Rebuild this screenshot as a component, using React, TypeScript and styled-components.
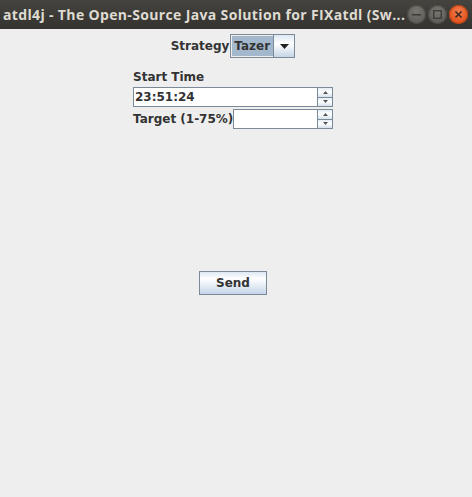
import React from "react";
import styled, { createGlobalStyle } from "styled-components";

const Global = createGlobalStyle`
  html, body { margin: 0; padding: 0; background: #eeeeee; }
  body { width: 472px; height: 497px; overflow: hidden; }
`;

const Window = styled.div`
  width: 472px;
  height: 497px;
  display: flex;
  flex-direction: column;
  background: #eeeeee;
  font-family: "DejaVu Sans", sans-serif;
`;

const TitleBar = styled.div`
  height: 29px;
  flex: none;
  display: flex;
  align-items: center;
  padding: 0 4px 0 3px;
  background: linear-gradient(#45443f, #3a3935 60%, #34332f);
  box-sizing: border-box;
`;

const Title = styled.div`
  flex: 1;
  color: #dfdbd2;
  font-family: "Open Sans", "Noto Sans", sans-serif;
  font-weight: 700;
  font-size: 14px;
  letter-spacing: 0.35px;
  white-space: nowrap;
  overflow: hidden;
  padding-bottom: 1px;
`;

const WinButtons = styled.div`
  display: flex;
  gap: 2px;
  align-items: center;
`;

const WinBtn = styled.div<{ $close?: boolean }>`
  width: 19px;
  height: 19px;
  border-radius: 50%;
  display: flex;
  align-items: center;
  justify-content: center;
  background: ${(p) =>
    p.$close
      ? "radial-gradient(circle at 50% 35%, #f27b4d, #e2531d 70%, #c8461a)"
      : "radial-gradient(circle at 50% 35%, #77766f, #5f5e59 70%, #55544f)"};
  box-shadow: inset 0 0 0 1px ${(p) => (p.$close ? "#b24317" : "#4a4945")};
`;

const Content = styled.div`
  flex: 1;
  width: 466px;
  display: flex;
  flex-direction: column;
  align-items: center;
  padding-top: 5px;
`;

const StrategyRow = styled.div`
  display: flex;
  align-items: center;
  height: 24px;
`;

const Label = styled.span`
  font-weight: 700;
  font-size: 12px;
  color: #333333;
  white-space: nowrap;
`;

const Combo = styled.div`
  display: flex;
  width: 65px;
  height: 24px;
  box-sizing: border-box;
  border: 1px solid #7a8a99;
  background: #eeeeee;
  margin-left: 1px;
`;

const ComboValue = styled.div`
  flex: 1;
  background: #a3b8cc;
  font-weight: 700;
  font-size: 12px;
  color: #333;
  display: flex;
  align-items: center;
  padding-left: 2px;
  margin: 1px 0 1px 1px;
`;

const ComboArrow = styled.div`
  width: 20px;
  display: flex;
  align-items: center;
  justify-content: center;
  background: linear-gradient(#dde8f3, #ffffff 40%, #c4d5e6);
  border-left: 1px solid #7a8a99;
`;

const Form = styled.div`
  width: 200px;
  margin-top: 12px;
  display: flex;
  flex-direction: column;
`;

const FieldRow = styled.div<{ $gap: number }>`
  display: flex;
  align-items: center;
  margin-top: ${(p) => p.$gap}px;
`;

const Spinner = styled.div<{ $w: number; $gap?: number }>`
  display: flex;
  width: ${(p) => p.$w}px;
  height: 20px;
  margin-top: ${(p) => p.$gap ?? 0}px;
`;

const TextField = styled.div`
  flex: 1;
  box-sizing: border-box;
  border: 1px solid #7a8a99;
  border-right: none;
  background: #ffffff;
  font-weight: 700;
  font-size: 12px;
  color: #333;
  display: flex;
  align-items: center;
  padding-left: 1px;
`;

const SpinButtons = styled.div`
  width: 16px;
  display: flex;
  flex-direction: column;
`;

const SpinBtn = styled.div`
  flex: 1;
  box-sizing: border-box;
  border: 1px solid #7a8a99;
  background: linear-gradient(#e4ecf4, #ffffff 45%, #d6e1ec);
  display: flex;
  align-items: center;
  justify-content: center;
  & + & { border-top: none; }
`;

const ButtonArea = styled.div`
  flex: 1;
  display: flex;
  align-items: center;
  justify-content: center;
  padding-bottom: 61px;
`;

const SendButton = styled.button`
  width: 68px;
  height: 24px;
  box-sizing: border-box;
  border: 1px solid #7a8a99;
  border-radius: 0;
  background: linear-gradient(#dde8f3, #ffffff 30%, #c5d6e8);
  font-family: "DejaVu Sans", sans-serif;
  font-weight: 700;
  font-size: 12px;
  color: #333;
  padding: 0;
`;

const Tri = ({ up, size = 3, color = "#333" }: { up?: boolean; size?: number; color?: string }) => (
  <svg width={size * 2 + 1} height={size + 1} viewBox={`0 0 ${size * 2 + 1} ${size + 1}`}>
    <polygon
      points={up ? `0,${size + 1} ${size * 2 + 1},${size + 1} ${size + 0.5},0` : `0,0 ${size * 2 + 1},0 ${size + 0.5},${size + 1}`}
      fill={color}
    />
  </svg>
);

export default function App() {
  return (
    <Window>
      <Global />
      <TitleBar>
        <Title>atdl4j - The Open-Source Java Solution for FIXatdl (Sw...</Title>
        <WinButtons>
          <WinBtn>
            <svg width="9" height="9" viewBox="0 0 9 9">
              <rect x="0" y="4" width="9" height="1.5" fill="#3c3b37" />
            </svg>
          </WinBtn>
          <WinBtn>
            <svg width="9" height="9" viewBox="0 0 9 9">
              <rect x="0.75" y="0.75" width="7.5" height="7.5" fill="none" stroke="#3c3b37" strokeWidth="1.3" />
            </svg>
          </WinBtn>
          <WinBtn $close>
            <svg width="9" height="9" viewBox="0 0 9 9">
              <path d="M1.5 1.5 L7.5 7.5 M7.5 1.5 L1.5 7.5" stroke="#3a2a22" strokeWidth="1.6" />
            </svg>
          </WinBtn>
        </WinButtons>
      </TitleBar>
      <Content>
        <StrategyRow>
          <Label>Strategy</Label>
          <Combo>
            <ComboValue>Tazer</ComboValue>
            <ComboArrow>
              <Tri size={4} color="#222" />
            </ComboArrow>
          </Combo>
        </StrategyRow>
        <Form>
          <Label>Start Time</Label>
          <Spinner $w={200} $gap={3}>
            <TextField>23:51:24</TextField>
            <SpinButtons>
              <SpinBtn><Tri up size={2} color="#555" /></SpinBtn>
              <SpinBtn><Tri size={2} color="#555" /></SpinBtn>
            </SpinButtons>
          </Spinner>
          <FieldRow $gap={2}>
            <Label>Target (1-75%)</Label>
            <Spinner $w={100}>
              <TextField />
              <SpinButtons>
                <SpinBtn><Tri up size={2} color="#555" /></SpinBtn>
                <SpinBtn><Tri size={2} color="#555" /></SpinBtn>
              </SpinButtons>
            </Spinner>
          </FieldRow>
        </Form>
        <ButtonArea>
          <SendButton>Send</SendButton>
        </ButtonArea>
      </Content>
    </Window>
  );
}
